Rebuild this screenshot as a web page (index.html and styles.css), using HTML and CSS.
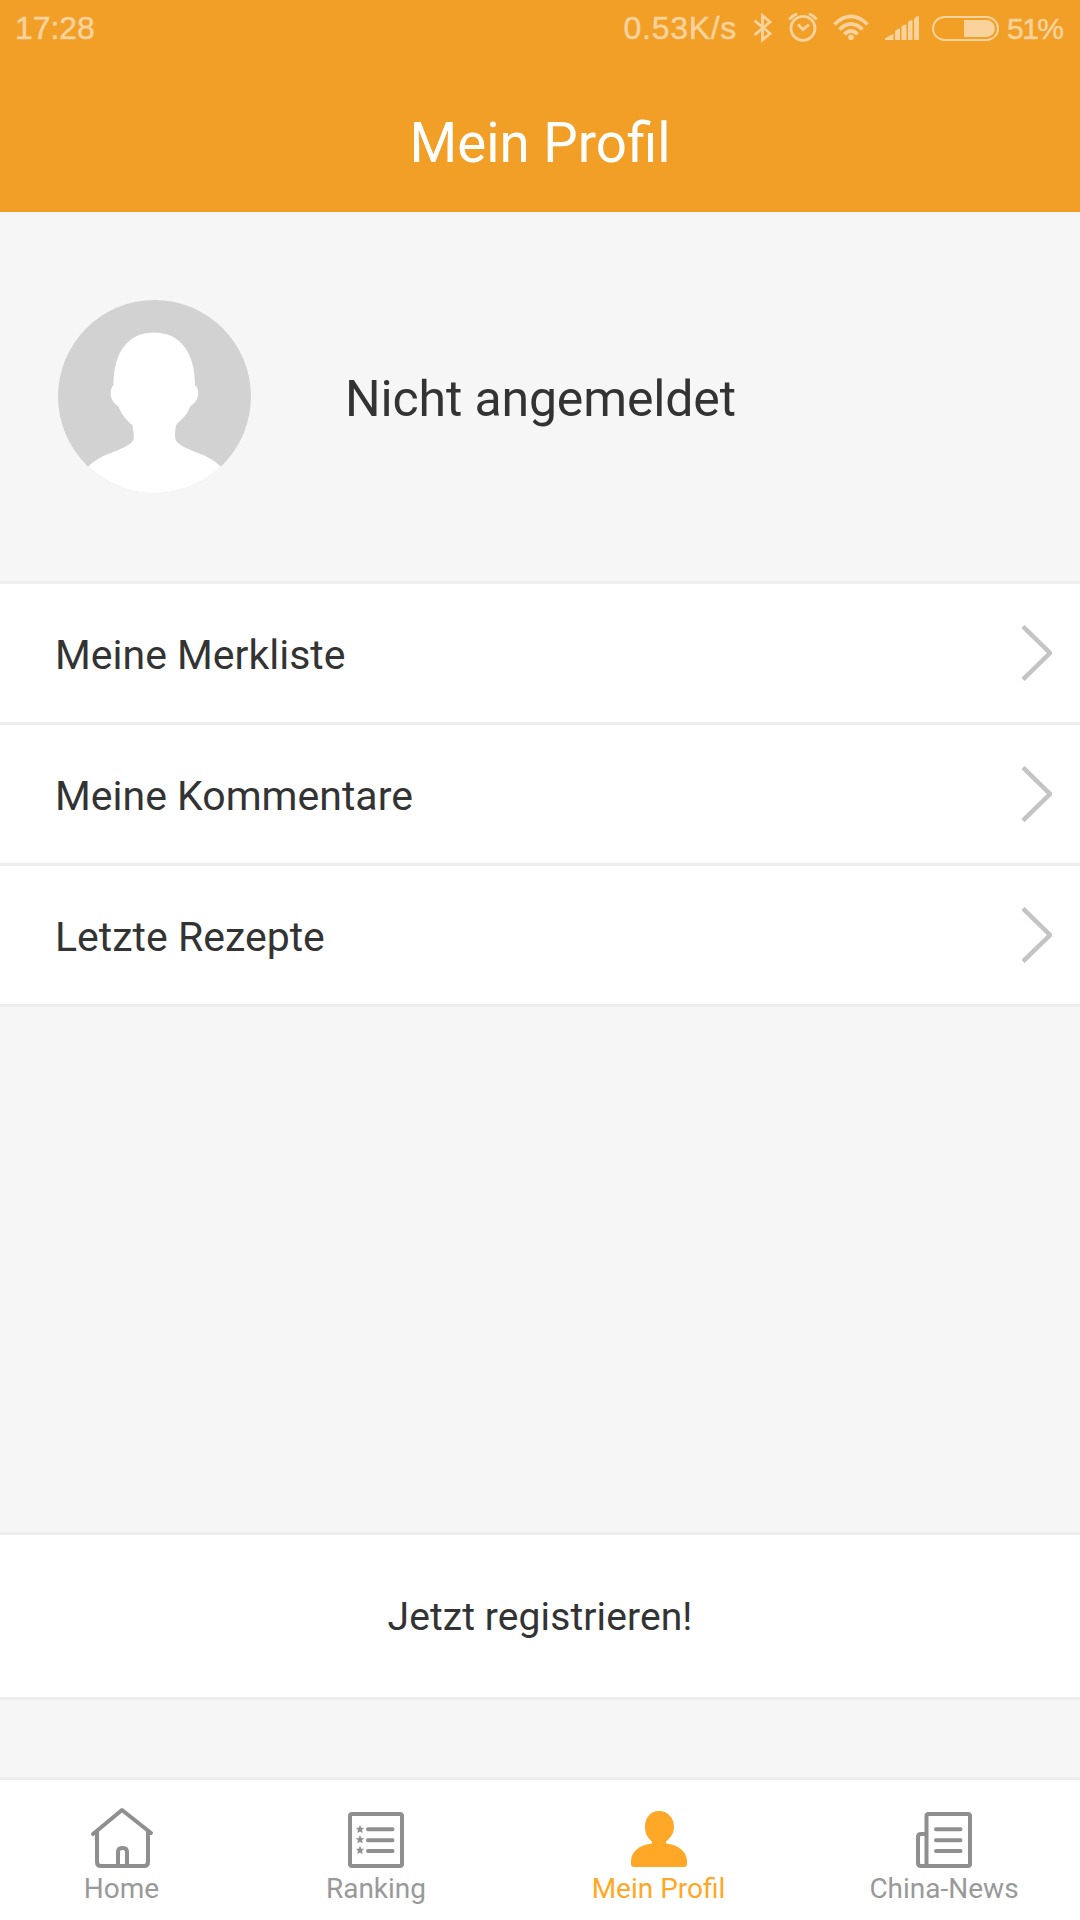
FILE: index.html
```html
<!DOCTYPE html>
<html lang="de">
<head>
  <meta charset="UTF-8">
  <title>Mein Profil</title>
  <link rel="stylesheet" href="styles.css">
</head>
<body>

  <header class="header">
    <div class="status">
      <span class="time">17:28</span>
      <span class="speed">0.53K/s</span>
      <svg class="bluetooth" width="20" height="30" viewBox="0 0 20 30" fill="none" stroke="currentColor" stroke-width="2.8">
        <path d="M1.5 7.5L17 20.5L9.5 27V2.5L17 9L1.5 22"/>
      </svg>
      <svg class="alarm" width="30" height="30" viewBox="0 0 30 30" fill="none" stroke="currentColor" stroke-width="2.8">
        <circle cx="15" cy="16.3" r="12"/>
        <path d="M10 12.5L15 17.5L21 12.5M1.2 7.5Q4 3.5 9 1.8M28.8 7.5Q26 3.5 21 1.8"/>
      </svg>
      <svg class="wifi" width="36" height="28" viewBox="0 0 36 28" fill="none" stroke="currentColor" stroke-width="3.8">
        <path d="M1.5 10.5Q9 2.3 18 2.3T34.5 10.5M6.5 15.5Q12 10 18 10T29.5 15.5M11.5 20.3Q14.5 17 18 17T24.5 20.3"/>
        <circle cx="18" cy="23.3" r="2.8" fill="currentColor" stroke="none"/>
      </svg>
      <svg class="signal" width="34" height="24" viewBox="0 0 34 24" fill="currentColor">
        <path d="M0 24V22.5L8.5 17.5V24zM10 24V15Q12 12.5 15 12.5V24zM16.5 24V10.5Q18.5 8.5 21.5 8.5V24zM23 24V6Q25 4 27.5 4V24zM29 24V3Q31 0 34 0V24z"/>
      </svg>
      <svg class="battery" width="67" height="25" viewBox="0 0 67 25">
        <rect x="1" y="1" width="65" height="23" rx="11.5" fill="none" stroke="currentColor" stroke-width="2"/>
        <path d="M32 4H54.5A8.5 8.5 0 0 1 54.5 21H32z" fill="currentColor"/>
      </svg>
      <span class="percent">51%</span>
    </div>
    <h1>Mein Profil</h1>
  </header>

  <section class="profile">
    <svg class="avatar" viewBox="0 0 193 193">
      <clipPath id="round"><circle cx="96.5" cy="96.5" r="96.5"/></clipPath>
      <g clip-path="url(#round)">
        <rect width="193" height="193" fill="#d2d2d2"/>
        <path fill="#fff" d="M96 32.5C70 32.5 55.5 52 55.5 85C51 89 51.5 102 60 106C64 115 69 121 74.5 125C75 133 77.5 138 74 142C64 152 43 152 28 169V193H165V169C150 152 129 152 119 142C116 138 117 133 118 125C124 119 129 115 132.5 106C141 102 142.5 89 137 85C137 52 122 32.5 96 32.5z"/>
      </g>
    </svg>
    <div class="name">Nicht angemeldet</div>
  </section>

  <div class="list">
    <div class="row">
      <span>Meine Merkliste</span>
      <svg class="arrow" viewBox="0 0 30 56"><path d="M1 1.5L28 28L1 54.5"/></svg>
    </div>
    <div class="row">
      <span>Meine Kommentare</span>
      <svg class="arrow" viewBox="0 0 30 56"><path d="M1 1.5L28 28L1 54.5"/></svg>
    </div>
    <div class="row">
      <span>Letzte Rezepte</span>
      <svg class="arrow" viewBox="0 0 30 56"><path d="M1 1.5L28 28L1 54.5"/></svg>
    </div>
  </div>

  <div class="register">Jetzt registrieren!</div>

  <nav class="tabs">
    <div class="tab home">
      <svg width="64" height="62" viewBox="0 0 64 62" fill="none" stroke="currentColor" stroke-width="4" stroke-linecap="round" stroke-linejoin="round">
        <path d="M3 27L32 3L61 26M7 25V55Q7 59 11 59H54Q58 59 58 55V25M28 58V45Q28 41 32 41H33Q37 41 37 45V58"/>
      </svg>
      <span>Home</span>
    </div>
    <div class="tab ranking">
      <svg width="56" height="62" viewBox="0 0 56 62" fill="none" stroke="currentColor" stroke-width="4">
        <rect x="2" y="7" width="52" height="52" rx="2"/>
        <path stroke-linecap="round" d="M20 22.3H44.5M20 33.2H44.5M20 44H44.5"/>
        <g fill="currentColor" stroke="currentColor" stroke-width="0.6">
          <path id="star" d="M12 18.5L13 21L15.5 21.2L13.7 22.8L14.3 25.5L12 24.2L9.7 25.5L10.3 22.8L8.500 21.2L11 21z"/>
          <use href="#star" y="10.3"/>
          <use href="#star" y="21"/>
        </g>
      </svg>
      <span>Ranking</span>
    </div>
    <div class="tab mine active">
      <svg width="56" height="62" viewBox="0 0 56 62" fill="currentColor">
        <path d="M28 4C37 4 43 11 43 20C43 27 39 31 35 34.5V36.5C48 38 56 45 56 54V57Q56 60 53 60H3Q0 60 0 57V54C0 45 8 38 21 36.5V34.5C17 31 14 27 14 20C14 11 19 4 28 4z"/>
      </svg>
      <span>Mein Profil</span>
    </div>
    <div class="tab news">
      <svg width="56" height="62" viewBox="0 0 56 62" fill="none" stroke="currentColor" stroke-width="4">
        <rect x="10.5" y="7" width="43.5" height="52" rx="2"/>
        <path d="M10 27H5Q2 27 2 30V56Q2 59 5 59H12"/>
        <path stroke-linecap="round" d="M20 22.3H44.5M20 33.2H44.5M20 44H44.5"/>
      </svg>
      <span>China-News</span>
    </div>
  </nav>

</body>
</html>
```
FILE: styles.css
```css
* {
  box-sizing: border-box;
}

body {
  margin: 0;
  height: 1920px;
  display: flex;
  flex-direction: column;
  background: #f6f6f6;
  font-family: Roboto, sans-serif;
  color: #333;
}

.header {
  height: 212px;
  background: #f19f26;
  color: #fff;
}

.status {
  height: 56px;
  padding: 0 17px 0 15px;
  display: flex;
  align-items: center;
  font-family: "Liberation Sans", Arial, sans-serif;
  font-size: 32px;
  white-space: nowrap;
  color: #f9d29c;
  -webkit-text-stroke: 0.5px #f9d29c;
}

.time {
  letter-spacing: -0.1px;
}

.speed {
  margin-left: auto;
  margin-right: 16px;
  letter-spacing: 0.7px;
}

.alarm {
  margin-left: 15px;
  margin-top: -2px;
}

.wifi {
  margin-left: 15px;
}

.signal {
  margin-left: 16px;
}

.battery {
  margin-left: 13px;
}

.percent {
  width: 56px;
  margin-left: 8px;
  padding-top: 1px;
  letter-spacing: -1.5px;
  font-size: 30px;
}

h1 {
  margin: 0;
  padding-top: 55px;
  font-size: 54.7px;
  font-weight: 400;
  line-height: 64px;
  text-align: center;
}

.profile {
  height: 369px;
  padding-left: 58px;
  display: flex;
  align-items: center;
}

.avatar {
  width: 193px;
  height: 193px;
}

.name {
  padding-top: 4px;
  margin-left: 94px;
  font-size: 50px;
  letter-spacing: -0.15px;
}

.list {
  border-top: 3px solid #eee;
}

.row {
  height: 141px;
  padding: 0 28px 0 55px;
  display: flex;
  align-items: center;
  justify-content: space-between;
  background: #fff;
  border-bottom: 3px solid #eee;
  font-size: 41px;
}

.row span {
  padding-top: 4px;
}

.arrow {
  width: 30px;
  height: 56px;
  fill: none;
  stroke: #c4c4c4;
  stroke-width: 4.5;
}

.register {
  height: 168px;
  margin-top: auto;
  margin-bottom: 77px;
  border: solid #eee;
  border-width: 3px 0;
  background: #fff;
  font-size: 39px;
  letter-spacing: 0.1px;
  line-height: 165px;
  text-align: center;
}

.tabs {
  height: 143px;
  display: flex;
  background: #fff;
  border-top: 3px solid #eee;
  font-size: 28px;
  color: #999;
}

.tab {
  padding-top: 27px;
  display: flex;
  flex-direction: column;
  align-items: center;
}

.tab svg {
  color: #8f8f8f;
}

.tab span {
  margin-top: 3px;
  line-height: 33px;
}

.home {
  width: 243px;
}

.ranking {
  width: 266px;
}

.mine {
  width: 299px;
}

.news {
  width: 272px;
}

.active,
.active svg {
  color: #ffa726;
}
```
